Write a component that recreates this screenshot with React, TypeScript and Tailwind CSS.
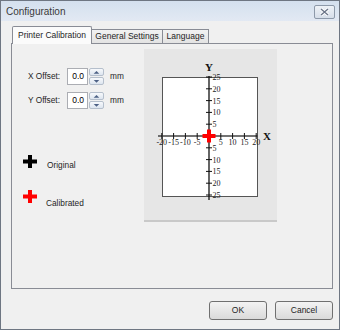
import React from "react";

const font = { fontFamily: '"Liberation Sans", Arial, sans-serif' };

function Plus({ color }: { color: string }) {
  return (
    <svg width="14" height="13" viewBox="0 0 14 13" className="shrink-0">
      <rect x="0" y="4.5" width="14" height="4" fill={color} />
      <rect x="5" y="0" width="4" height="13" fill={color} />
    </svg>
  );
}

function Spin({ value }: { value: string }) {
  return (
    <div className="flex h-[17px]">
      <div className="w-[21px] border border-[#abadb3] bg-white flex items-center justify-end pr-[3px] text-[8.5px] text-black">
        {value}
      </div>
      <div className="w-[16px] flex flex-col gap-[1px] pl-[1px]">
        {["M4 6 L7 3 L10 6 Z", "M4 3 L7 6 L10 3 Z"].map((d) => (
          <div
            key={d}
            className="h-[8px] border border-[#b5bfcc] rounded-[2px] bg-gradient-to-b from-[#f7f9fc] to-[#dde5ef] flex items-center justify-center"
          >
            <svg width="14" height="8" viewBox="0 0 14 8">
              <path d={d} fill="#4d6185" />
            </svg>
          </div>
        ))}
      </div>
    </div>
  );
}

function Graph() {
  const cx = 65;
  const cy = 87;
  const u = 11.8;
  const ks = [1, 2, 3, 4, 5];
  const xs = [-4, -3, -2, -1, 1, 2, 3, 4];
  const serif = '"Liberation Serif", "Times New Roman", serif';
  return (
    <svg width="133" height="171" viewBox="0 0 133 171">
      <rect x="18.5" y="28.5" width="95" height="119" fill="#fff" stroke="#555" strokeWidth="1" />
      <line x1="14" y1={cy} x2="114" y2={cy} stroke="#444" strokeWidth="1.3" />
      <line x1={cx} y1="27" x2={cx} y2="151" stroke="#111" strokeWidth="1.3" />
      {ks.map((k) => (
        <g key={k} fontFamily={serif} fontSize="8" fill="#222">
          <line x1={cx - 3} y1={cy - k * u} x2={cx + 3} y2={cy - k * u} stroke="#111" />
          <line x1={cx - 3} y1={cy + k * u} x2={cx + 3} y2={cy + k * u} stroke="#111" />
          <text x={cx + 3.5} y={cy - k * u + 3}>{k * 5}</text>
          <text x={cx + 3.5} y={cy + k * u + 3}>{k * 5}</text>
        </g>
      ))}
      {xs.map((k) => (
        <g key={k} fontFamily={serif} fontSize="8" fill="#222">
          <line x1={cx + k * u} y1={cy - 3} x2={cx + k * u} y2={cy + 3} stroke="#111" />
          <text x={cx + k * u} y={cy + 9} textAnchor="middle">
            {k * 5}
          </text>
        </g>
      ))}
      <text x={cx} y="22" textAnchor="middle" fontFamily={serif} fontWeight="bold" fontSize="11" fill="#111">
        Y
      </text>
      <text x="123" y={cy + 4} textAnchor="middle" fontFamily={serif} fontWeight="bold" fontSize="11" fill="#111">
        X
      </text>
      <rect x={cx - 6.5} y={cy - 2} width="13" height="4" fill="#ff0000" />
      <rect x={cx - 2} y={cy - 6.5} width="4" height="13" fill="#ff0000" />
    </svg>
  );
}

export default function App() {
  return (
    <div
      className="w-[340px] h-[330px] flex flex-col bg-[#f0f0f0] border border-[#6e7682] text-[#1e1e1e] overflow-hidden"
      style={font}
    >
      {/* title bar */}
      <div className="h-[20px] shrink-0 flex items-center justify-between pl-[5px] pr-[4px] bg-gradient-to-b from-[#d4e0ee] to-[#e2e9f3]">
        <span className="text-[10px] text-[#3a3a3a]">Configuration</span>
        <div className="w-[21px] h-[14px] mt-[2px] border border-[#8d99a9] rounded-[2px] bg-gradient-to-b from-[#eef2f7] to-[#d6dee9] flex items-center justify-center">
          <svg width="9" height="8" viewBox="0 0 9 8">
            <path d="M1 1 L8 7 M8 1 L1 7" stroke="#fff" strokeWidth="3" />
            <path d="M1 1 L8 7 M8 1 L1 7" stroke="#6b7588" strokeWidth="1.4" />
          </svg>
        </div>
      </div>

      <div className="flex flex-col pl-[10px] pr-[6px] pt-[5px]">
        {/* tabs */}
        <div className="h-[17px] flex items-end pl-[1px] text-[8.5px]">
          <div className="relative z-10 h-[18px] w-[80px] mb-[-1px] border border-b-0 border-[#898c95] rounded-t-[2px] bg-[#fbfbfb] flex items-center justify-center">
            Printer Calibration
          </div>
          <div className="h-[14px] w-[71px] border border-b-0 border-l-0 border-[#898c95] bg-gradient-to-b from-[#f2f2f2] to-[#e3e3e3] flex items-center justify-center">
            General Settings
          </div>
          <div className="h-[14px] w-[46px] border border-b-0 border-l-0 border-[#898c95] bg-gradient-to-b from-[#f2f2f2] to-[#e3e3e3] flex items-center justify-center">
            Language
          </div>
        </div>

        {/* panel */}
        <div className="h-[246px] border border-[#898c95] bg-[#f0f0f0] flex">
          <div className="w-[132px] flex flex-col text-[8.3px]">
            <div className="flex flex-col gap-[7px] pl-[16px] pt-[24px]">
              {["X Offset:", "Y Offset:"].map((l) => (
                <div key={l} className="flex items-center">
                  <span className="w-[39px]">{l}</span>
                  <Spin value="0.0" />
                  <span className="ml-[6px]">mm</span>
                </div>
              ))}
            </div>
            <div className="flex items-start pl-[11px] mt-[46px]">
              <Plus color="#000" />
              <span className="ml-[10px] mt-[5px] leading-[10px]">Original</span>
            </div>
            <div className="flex items-start pl-[11px] mt-[20px]">
              <Plus color="#ff0000" />
              <span className="ml-[9px] mt-[8px] leading-[10px]">Calibrated</span>
            </div>
          </div>
          <div className="mt-[5px] h-[173px] w-[133px] bg-[#e6e6e6] border-b-2 border-[#c9c9c9]">
            <Graph />
          </div>
        </div>

        {/* buttons */}
        <div className="flex justify-end gap-[8px] mt-[12px] text-[8.5px]">
          {["OK", "Cancel"].map((b) => (
            <div
              key={b}
              className="w-[58px] h-[19px] border border-[#707070] rounded-[3px] bg-gradient-to-b from-[#f3f3f3] to-[#dadada] flex items-center justify-center"
            >
              {b}
            </div>
          ))}
        </div>
      </div>
    </div>
  );
}
